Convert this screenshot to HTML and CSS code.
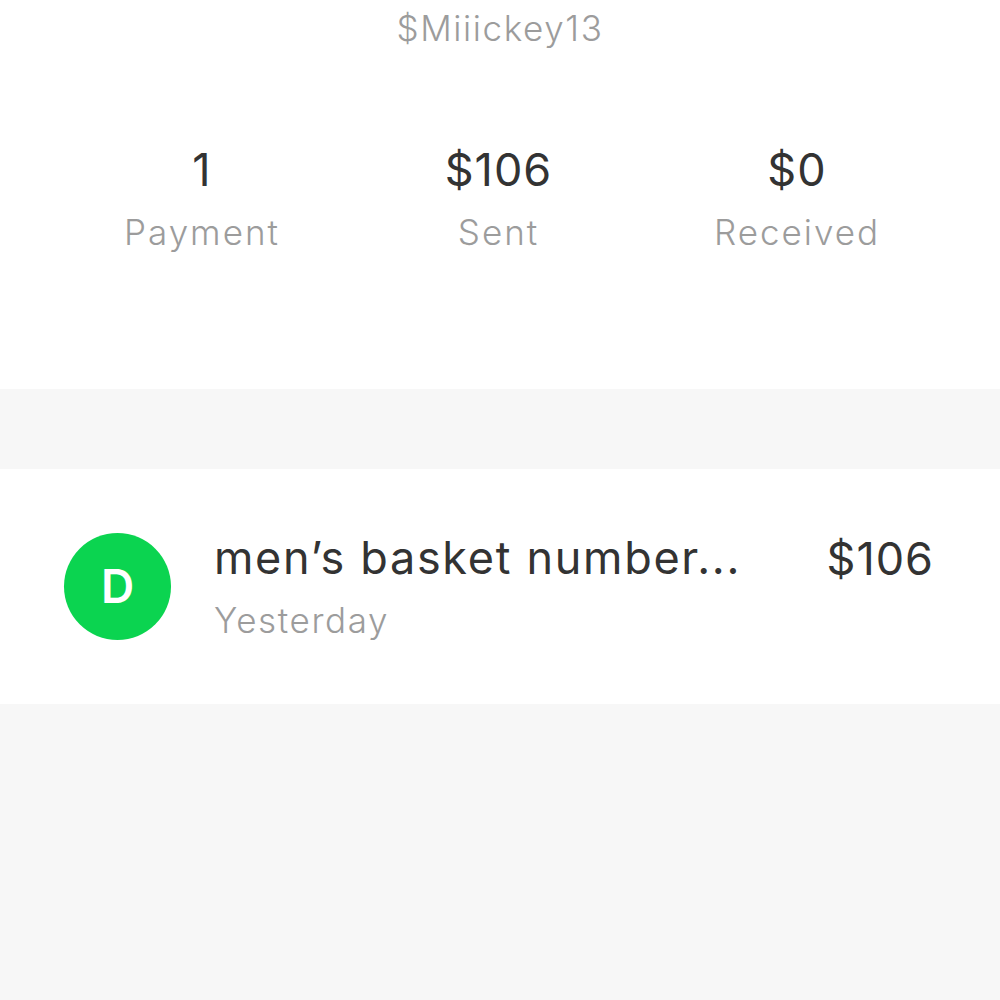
FILE: index.html
```html
<!DOCTYPE html>
<html lang="en">
<head>
<meta charset="utf-8">
<title>Profile</title>
<link rel="stylesheet" href="styles.css">
</head>
<body>
<header class="profile">
  <div class="handle">$Miiickey13</div>
  <div class="stats">
    <div class="stat"><div class="stat-value">1</div><div class="stat-label">Payment</div></div>
    <div class="stat"><div class="stat-value">$106</div><div class="stat-label">Sent</div></div>
    <div class="stat"><div class="stat-value">$0</div><div class="stat-label">Received</div></div>
  </div>
</header>
<section class="activity">
  <div class="row">
    <div class="avatar">D</div>
    <div class="row-main">
      <div class="row-title">men’s basket number...</div>
      <div class="row-sub">Yesterday</div>
    </div>
    <div class="row-amount">$106</div>
  </div>
</section>
</body>
</html>
```
FILE: styles.css
```css
html, body { margin: 0; padding: 0; height: 100%; }
body { background: #f7f7f7; font-family: Inter, "Noto Sans", sans-serif; overflow: hidden; }
.profile { background: #fff; height: 389px; box-sizing: border-box; padding-top: 4px; }
.handle { text-align: center; font-size: 35px; font-weight: 300; line-height: 48px; color: #9c9c9c; letter-spacing: 1.6px; }
.stats { display: grid; grid-template-columns: 298px 295px 302px; padding-left: 53px; margin-top: 92px; }
.stat { text-align: center; }
.stat-value { font-size: 45px; line-height: 60px; color: #333; margin-top: -4px; letter-spacing: 1px; }
.stat-label { font-size: 35px; font-weight: 300; line-height: 48px; margin-top: 8px; color: #9c9c9c; letter-spacing: 2px; }
.activity { background: #fff; margin-top: 80px; height: 235px; }
.row { display: flex; align-items: center; height: 100%; padding: 0 67px 0 64px; box-sizing: border-box; }
.avatar { width: 107px; height: 107px; border-radius: 50%; background: #0bd450; color: #fff; font: 600 46px/107px Inter, sans-serif; text-align: center; flex: none; }
.row-main { flex: 1; margin-left: 43px; min-width: 0; margin-top: -2px; }
.row-title { font-size: 45px; line-height: 60px; color: #333; white-space: nowrap; letter-spacing: 1.7px; }
.row-sub { font-size: 35px; font-weight: 300; line-height: 48px; margin-top: 8px; color: #9c9c9c; letter-spacing: 1.6px; }
.row-amount { font-size: 45px; line-height: 60px; color: #333; align-self: flex-start; margin-top: 60px; letter-spacing: 1px; margin-right: -1px; }
```
